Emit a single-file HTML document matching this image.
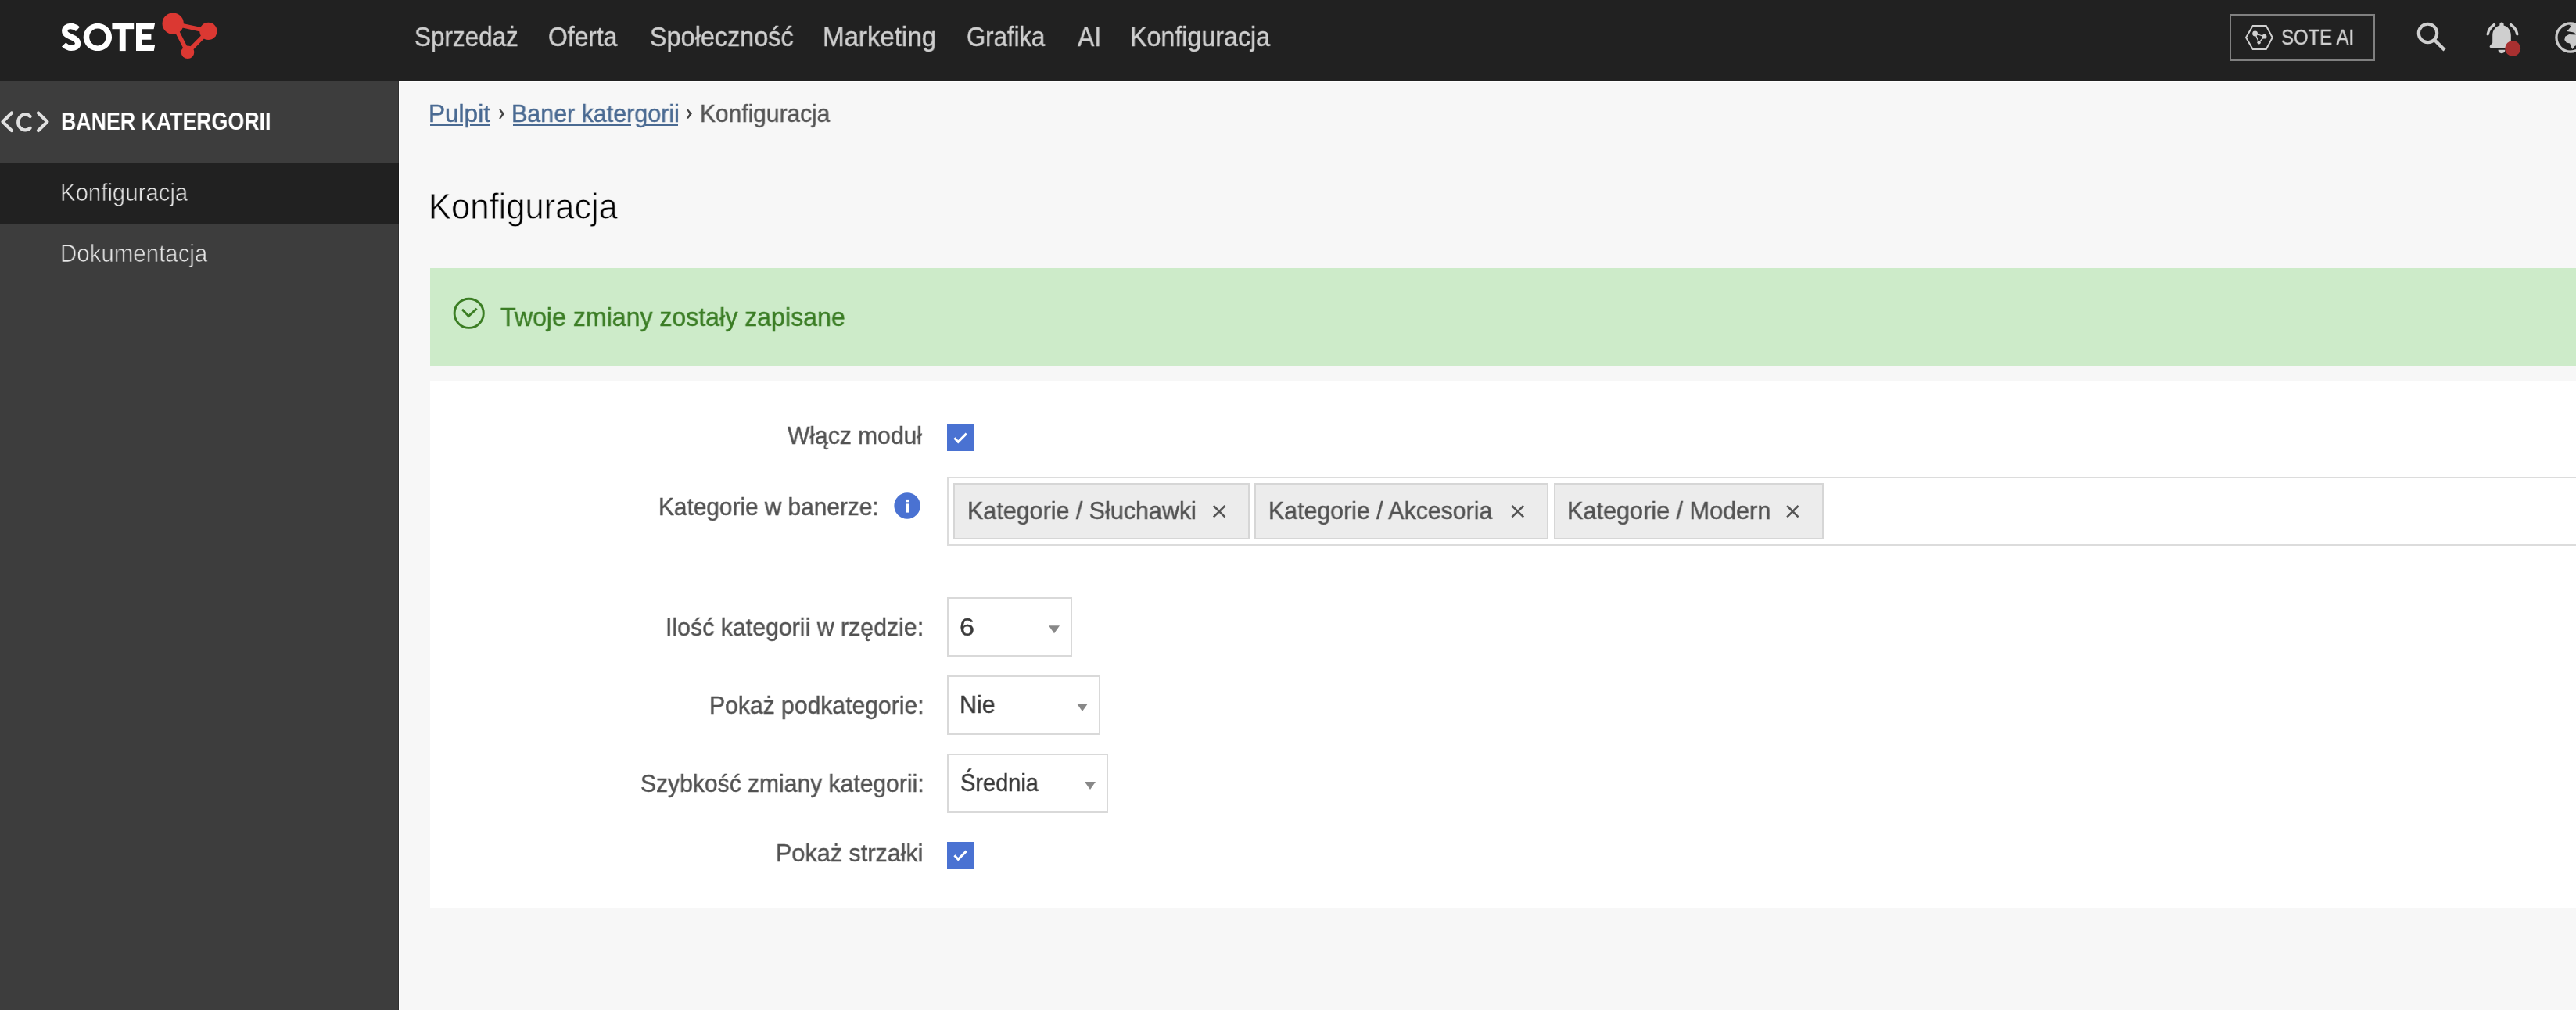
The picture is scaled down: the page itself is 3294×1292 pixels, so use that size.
<!DOCTYPE html>
<html lang="pl">
<head>
<meta charset="utf-8">
<title>Baner kategorii - Konfiguracja</title>
<style>
html,body{margin:0;padding:0;}html{width:3294px;height:1292px;overflow:hidden;}
body{width:3294px;height:1292px;overflow:hidden;position:relative;background:#f7f7f7;font-family:"Liberation Sans",sans-serif;}
.b{position:absolute;box-sizing:border-box;}
.t{position:absolute;white-space:nowrap;transform-origin:0 0;will-change:transform;font-family:"Liberation Sans",sans-serif;}
svg{position:absolute;overflow:visible;}
</style>
</head>
<body>
<!-- top bar -->
<div class="b" style="left:0;top:0;width:3294px;height:104px;background:#212121"></div>
<!-- sidebar -->
<div class="b" style="left:0;top:104px;width:510px;height:1188px;background:#3d3d3d"></div>
<div class="b" style="left:0;top:208px;width:510px;height:78px;background:#212121"></div>
<!-- resampling edge ringing -->
<div class="b" style="left:510px;top:103px;width:2784px;height:1px;background:#151515"></div>
<div class="b" style="left:510px;top:104px;width:2784px;height:1px;background:#ffffff"></div>
<div class="b" style="left:509px;top:104px;width:1px;height:1188px;background:rgba(0,0,0,0.2)"></div>
<div class="b" style="left:510px;top:105px;width:1px;height:1187px;background:#ffffff"></div>
<!-- alert -->
<div class="b" style="left:550px;top:343px;width:2744px;height:125px;background:#cdebc9"></div>
<!-- panel -->
<div class="b" style="left:550px;top:488px;width:2744px;height:674px;background:#ffffff"></div>
<!-- tags box -->
<div class="b" style="left:1211px;top:610px;width:2085px;height:88px;border:2px solid #dcdcdc;background:#fff"></div>
<div class="b" style="left:1219px;top:618px;width:379px;height:72px;border:2px solid #d6d6d6;background:#ececec"></div>
<div class="b" style="left:1604px;top:618px;width:376px;height:72px;border:2px solid #d6d6d6;background:#ececec"></div>
<div class="b" style="left:1986.6px;top:618px;width:345px;height:72px;border:2px solid #d6d6d6;background:#ececec"></div>
<!-- selects -->
<div class="b" style="left:1211px;top:764px;width:160px;height:76px;border:2px solid #d9d9d9;background:#fff"></div>
<div class="b" style="left:1211px;top:864px;width:196px;height:76px;border:2px solid #d9d9d9;background:#fff"></div>
<div class="b" style="left:1211px;top:964px;width:206px;height:76px;border:2px solid #d9d9d9;background:#fff"></div>
<!-- checkboxes -->
<div class="b" style="left:1211px;top:543px;width:34px;height:34px;background:#4a72d2"></div>
<div class="b" style="left:1211px;top:1077px;width:34px;height:34px;background:#4a72d2"></div>
<!-- SOTE logo -->
<svg style="left:0;top:0" width="300" height="104" viewBox="0 0 300 104">
 <g fill="#ffffff">
  <path d="M99.5,37.2 C96.6,34.6 93.5,33.5 90.3,33.5 C85.6,33.5 82.8,36.2 82.8,39.6 C82.8,43.6 86.2,45.3 91,47.2 C96.2,49.2 99.6,51.3 99.6,55.6 C99.6,59.6 96.2,61.4 91.2,61.4 C87.2,61.4 84.2,59.6 81.6,57" fill="none" stroke="#fff" stroke-width="7.4"/>
  <path fill-rule="evenodd" d="M124.85,29.8 a18.15,17.65 0 1,0 0.01,0 Z M124.9,36.4 a10.7,11.1 0 1,1 -0.01,0 Z"/>
  <rect x="143.4" y="29.8" width="27.8" height="7.4"/>
  <rect x="152.8" y="29.8" width="7.9" height="35.3"/>
  <path d="M174,29.8 H198.1 L196.6,37.2 H181.4 V43.3 H193.4 V50.8 H181.4 V57.8 H198.1 L196.8,65.1 H174 Z"/>
 </g>
 <g fill="#db3832" stroke="#db3832" stroke-width="5.5">
  <line x1="221.2" y1="30.1" x2="266.4" y2="39.9"/>
  <line x1="221.2" y1="30.1" x2="240" y2="66.8"/>
  <line x1="266.4" y1="39.9" x2="240" y2="66.8"/>
  <circle cx="221.2" cy="30.1" r="13.7" stroke="none"/>
  <circle cx="266.4" cy="39.9" r="11.1" stroke="none"/>
  <circle cx="240" cy="66.8" r="8.3" stroke="none"/>
 </g>
</svg>
<!-- SOTE AI button -->
<div class="b" style="left:2851px;top:18px;width:186px;height:60px;border:2px solid #808080"></div>
<svg style="left:2860px;top:20px" width="60" height="56" viewBox="2860 20 60 56">
 <path d="M2880.7,33 H2897.8 L2905.8,48 L2897.8,63 H2880.7 L2872,48 Z" fill="none" stroke="#cfcfcf" stroke-width="2"/>
 <g fill="#cfcfcf" stroke="#cfcfcf" stroke-width="1.3">
  <line x1="2883.6" y1="43" x2="2895.5" y2="46.7"/><line x1="2883.6" y1="43" x2="2888.6" y2="54.3"/><line x1="2895.5" y1="46.7" x2="2888.6" y2="54.3"/>
  <circle cx="2883.6" cy="43" r="3.4" stroke="none"/><circle cx="2895.5" cy="46.7" r="2.9" stroke="none"/><circle cx="2888.6" cy="54.3" r="2.2" stroke="none"/>
 </g>
</svg>
<!-- search -->
<svg style="left:3080px;top:20px" width="60" height="60" viewBox="3080 20 60 60">
 <circle cx="3104.5" cy="42.5" r="11.7" fill="none" stroke="#cfcfcf" stroke-width="4.1"/>
 <line x1="3113.5" y1="51.5" x2="3126" y2="64" stroke="#cfcfcf" stroke-width="4.4"/>
</svg>
<!-- bell -->
<svg style="left:3170px;top:20px" width="60" height="60" viewBox="3170 20 60 60">
 <g fill="#cfcfcf">
  <path d="M3199,28.6 c1.6,0 2.6,1.2 2.6,2.6 v1.4 c5.6,1.6 9.2,6.6 9.2,12.6 v9.6 l3.2,3.8 c0.8,1 0.3,2.6 -1.2,2.6 h-27.6 c-1.5,0 -2,-1.6 -1.2,-2.6 l3.2,-3.8 v-9.6 c0,-6 3.6,-11 9.2,-12.6 v-1.4 c0,-1.4 1,-2.6 2.6,-2.6 Z"/>
  <path d="M3194.5,63.8 h9 c0,2.5 -2,4.4 -4.5,4.4 s-4.5,-1.9 -4.5,-4.4 Z"/>
 </g>
 <g fill="none" stroke="#cfcfcf" stroke-width="3.4" stroke-linecap="round">
  <path d="M3189.5,31.5 C3185,34.5 3182,39 3181.2,43.8"/>
  <path d="M3210.5,31.5 C3215,34.5 3218,39 3218.8,43.8"/>
 </g>
 <circle cx="3213.2" cy="62" r="10" fill="#a83030"/>
</svg>
<!-- globe (clipped) -->
<svg style="left:3260px;top:20px" width="34" height="60" viewBox="3260 20 34 60">
 <circle cx="3287.05" cy="48" r="18.1" fill="none" stroke="#cacaca" stroke-width="3.3"/>
 <path d="M3285,31.8 L3294,30.5 V44.4 L3292.5,44.4 L3292.9,42.6 L3290,41.2 L3282.3,40 L3284.2,38 L3287.9,33.5 Z" fill="#cacaca"/>
 <path d="M3280.1,46.7 L3285.1,43.9 L3294,44.4 V58.3 L3292.3,58.9 L3289.5,63 L3287.3,58.9 L3286.2,55.6 L3281.8,54.4 L3279.3,51.1 Z" fill="#cacaca"/>
</svg>
<!-- <C> icon -->
<svg style="left:0;top:130px" width="70" height="50" viewBox="0 130 70 50">
 <g fill="none" stroke="#e0e0e0" stroke-width="4.2" stroke-linecap="round" stroke-linejoin="round">
  <polyline points="14.9,144.4 3.5,155.7 14.9,167.1"/>
  <polyline points="49,144.4 60.4,155.7 49,167.1"/>
  <path d="M38.6,149 A9.2,10 0 1,0 38.6,163.8"/>
 </g>
</svg>
<!-- check circle -->
<svg style="left:570px;top:370px" width="60" height="60" viewBox="570 370 60 60">
 <circle cx="599.7" cy="400.8" r="18.6" fill="none" stroke="#3b7d23" stroke-width="2.9"/>
 <polyline points="591,395.7 599.2,404.4 609.7,394.8" fill="none" stroke="#3b7d23" stroke-width="2.9"/>
</svg>
<!-- checkbox checks -->
<svg style="left:1211px;top:543px" width="34" height="34" viewBox="1211 543 34 34">
 <polyline points="1220.4,560.3 1225.2,565.3 1235.8,554.6" fill="none" stroke="#fff" stroke-width="3"/>
</svg>
<svg style="left:1211px;top:1077px" width="34" height="34" viewBox="1211 543 34 34">
 <polyline points="1220.4,560.3 1225.2,565.3 1235.8,554.6" fill="none" stroke="#fff" stroke-width="3"/>
</svg>
<!-- info -->
<svg style="left:1140px;top:625px" width="40" height="44" viewBox="1140 625 40 44">
 <circle cx="1160.1" cy="647" r="16.7" fill="#4a72d2"/>
 <rect x="1158" y="638.9" width="4" height="3.4" fill="#fff"/>
 <rect x="1158" y="644.4" width="4" height="11.2" fill="#fff"/>
</svg>
<!-- tag x -->
<svg style="left:0;top:0" width="2400" height="700" viewBox="0 0 2400 700">
 <g stroke="#555" stroke-width="2.6">
  <path d="M1551.8,647 L1566.4,661.4 M1566.4,647 L1551.8,661.4"/>
  <path d="M1933.4,647 L1948.2,661.4 M1948.2,647 L1933.4,661.4"/>
  <path d="M2285.2,647 L2299.6,661.4 M2299.6,647 L2285.2,661.4"/>
 </g>
</svg>
<!-- select arrows -->
<svg style="left:0;top:0" width="1500" height="1100" viewBox="0 0 1500 1100">
 <g fill="#888">
  <path d="M1341,800.2 H1355 L1348,810.2 Z"/>
  <path d="M1377,900 H1391 L1384,910 Z"/>
  <path d="M1387,1000 H1401 L1394,1010 Z"/>
 </g>
</svg>
<!-- breadcrumb separators and underlines -->
<div class="b" style="left:549.9px;top:158.2px;width:41.8px;height:2.6px;background:#4a6a92"></div>
<div class="b" style="left:601px;top:158.2px;width:25.8px;height:2.6px;background:#4a6a92"></div>
<div class="b" style="left:656px;top:158.2px;width:150.7px;height:2.6px;background:#4a6a92"></div>
<div class="b" style="left:825.2px;top:158.2px;width:41.5px;height:2.6px;background:#4a6a92"></div>
<svg style="left:630px;top:130px" width="260" height="30" viewBox="630 130 260 30">
 <g fill="#444">
  <path d="M638,139.7 L640.4,139.9 L645.1,145.6 L640.4,151.8 L638,151.7 L641.6,145.7 Z"/>
  <path d="M877.8,139.7 L880.2,139.9 L884.9,145.6 L880.2,151.8 L877.8,151.7 L881.4,145.7 Z"/>
 </g>
</svg>
<div class="t" style="left:529.64px;top:30.37px;font-size:34.8px;line-height:34.8px;font-weight:400;color:#cfcfcf;transform:scaleX(0.9034);-webkit-text-stroke:0.45px #cfcfcf;">Sprzedaż</div>
<div class="t" style="left:701.43px;top:30.37px;font-size:34.8px;line-height:34.8px;font-weight:400;color:#cfcfcf;transform:scaleX(0.9147);-webkit-text-stroke:0.45px #cfcfcf;">Oferta</div>
<div class="t" style="left:830.71px;top:30.37px;font-size:34.8px;line-height:34.8px;font-weight:400;color:#cfcfcf;transform:scaleX(0.9302);-webkit-text-stroke:0.45px #cfcfcf;">Społeczność</div>
<div class="t" style="left:1052.36px;top:30.37px;font-size:34.8px;line-height:34.8px;font-weight:400;color:#cfcfcf;transform:scaleX(0.9496);-webkit-text-stroke:0.45px #cfcfcf;">Marketing</div>
<div class="t" style="left:1235.95px;top:30.37px;font-size:34.8px;line-height:34.8px;font-weight:400;color:#cfcfcf;transform:scaleX(0.8936);-webkit-text-stroke:0.45px #cfcfcf;">Grafika</div>
<div class="t" style="left:1377.80px;top:30.37px;font-size:34.8px;line-height:34.8px;font-weight:400;color:#cfcfcf;transform:scaleX(0.9187);-webkit-text-stroke:0.45px #cfcfcf;">AI</div>
<div class="t" style="left:1445.42px;top:30.37px;font-size:34.8px;line-height:34.8px;font-weight:400;color:#cfcfcf;transform:scaleX(0.9261);-webkit-text-stroke:0.45px #cfcfcf;">Konfiguracja</div>
<div class="t" style="left:2916.84px;top:33.92px;font-size:27.5px;line-height:27.5px;font-weight:400;color:#d0d0d0;transform:scaleX(0.8706);-webkit-text-stroke:0.45px #d0d0d0;">SOTE AI</div>
<div class="t" style="left:78.10px;top:138.73px;font-size:32.2px;line-height:32.2px;font-weight:700;color:#ffffff;transform:scaleX(0.8306);">BANER KATERGORII</div>
<div class="t" style="left:76.65px;top:229.63px;font-size:32.2px;line-height:32.2px;font-weight:400;color:#ececec;transform:scaleX(0.9119);-webkit-text-stroke:0.7px #212121;paint-order:fill stroke;">Konfiguracja</div>
<div class="t" style="left:76.64px;top:307.80px;font-size:32.0px;line-height:32.0px;font-weight:400;color:#e8e8e8;transform:scaleX(0.9203);-webkit-text-stroke:0.7px #3d3d3d;paint-order:fill stroke;">Dokumentacja</div>
<div class="t" style="left:547.67px;top:130.00px;font-size:31.3px;line-height:31.3px;font-weight:400;color:#4a6a92;transform:scaleX(1.0084);-webkit-text-stroke:0.45px #4a6a92;">Pulpit</div>
<div class="t" style="left:653.57px;top:130.00px;font-size:31.3px;line-height:31.3px;font-weight:400;color:#4a6a92;transform:scaleX(0.9723);-webkit-text-stroke:0.45px #4a6a92;">Baner katergorii</div>
<div class="t" style="left:895.01px;top:130.00px;font-size:31.3px;line-height:31.3px;font-weight:400;color:#555555;transform:scaleX(0.9562);-webkit-text-stroke:0.45px #555555;">Konfiguracja</div>
<div class="t" style="left:548.22px;top:240.63px;font-size:46.2px;line-height:46.2px;font-weight:400;color:#000000;transform:scaleX(0.9423);-webkit-text-stroke:0.8px #f7f7f7;paint-order:fill stroke;">Konfiguracja</div>
<div class="t" style="left:639.96px;top:388.58px;font-size:33.2px;line-height:33.2px;font-weight:400;color:#3b7d25;transform:scaleX(0.9673);-webkit-text-stroke:0.45px #3b7d25;">Twoje zmiany zostały zapisane</div>
<div class="t" style="left:1007.20px;top:541.84px;font-size:31.6px;line-height:31.6px;font-weight:400;color:#525252;transform:scaleX(0.9508);-webkit-text-stroke:0.45px #525252;">Włącz moduł</div>
<div class="t" style="left:842.02px;top:632.84px;font-size:31.6px;line-height:31.6px;font-weight:400;color:#525252;transform:scaleX(0.9430);-webkit-text-stroke:0.45px #525252;">Kategorie w banerze:</div>
<div class="t" style="left:1237.36px;top:637.94px;font-size:31.6px;line-height:31.6px;font-weight:400;color:#525252;transform:scaleX(0.9640);-webkit-text-stroke:0.45px #525252;">Kategorie / Słuchawki</div>
<div class="t" style="left:1622.38px;top:637.94px;font-size:31.6px;line-height:31.6px;font-weight:400;color:#525252;transform:scaleX(0.9589);-webkit-text-stroke:0.45px #525252;">Kategorie / Akcesoria</div>
<div class="t" style="left:2004.35px;top:637.94px;font-size:31.6px;line-height:31.6px;font-weight:400;color:#525252;transform:scaleX(0.9688);-webkit-text-stroke:0.45px #525252;">Kategorie / Modern</div>
<div class="t" style="left:850.97px;top:786.74px;font-size:31.6px;line-height:31.6px;font-weight:400;color:#525252;transform:scaleX(0.9592);-webkit-text-stroke:0.45px #525252;">Ilość kategorii w rzędzie:</div>
<div class="t" style="left:1227.30px;top:786.79px;font-size:31.3px;line-height:31.3px;font-weight:400;color:#3a3a3a;transform:scaleX(1.0876);-webkit-text-stroke:0.45px #3a3a3a;">6</div>
<div class="t" style="left:906.59px;top:886.64px;font-size:31.6px;line-height:31.6px;font-weight:400;color:#525252;transform:scaleX(0.9530);-webkit-text-stroke:0.45px #525252;">Pokaż podkategorie:</div>
<div class="t" style="left:1227.26px;top:886.34px;font-size:31.6px;line-height:31.6px;font-weight:400;color:#3a3a3a;transform:scaleX(0.9647);-webkit-text-stroke:0.45px #3a3a3a;">Nie</div>
<div class="t" style="left:818.50px;top:986.64px;font-size:31.6px;line-height:31.6px;font-weight:400;color:#525252;transform:scaleX(0.9516);-webkit-text-stroke:0.45px #525252;">Szybkość zmiany kategorii:</div>
<div class="t" style="left:1227.84px;top:986.04px;font-size:31.6px;line-height:31.6px;font-weight:400;color:#3a3a3a;transform:scaleX(0.9176);-webkit-text-stroke:0.45px #3a3a3a;">Średnia</div>
<div class="t" style="left:991.85px;top:1075.94px;font-size:31.6px;line-height:31.6px;font-weight:400;color:#525252;transform:scaleX(0.9673);-webkit-text-stroke:0.45px #525252;">Pokaż strzałki</div></body></html>
